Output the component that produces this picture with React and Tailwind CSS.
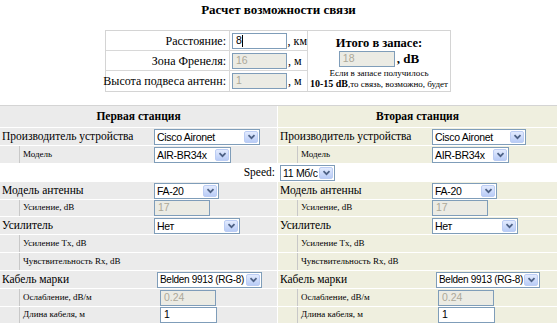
import React from "react";

const Chevron = () => (
  <svg width="9" height="6" viewBox="0 0 9 6">
    <path d="M1.5 1.2 L4.5 4.2 L7.5 1.2" stroke="#4d6185" strokeWidth="1.7" fill="none" />
  </svg>
);

function Select({ w, text, ts = "text-[10.5px]" }) {
  return (
    <div className={`${w} h-[16px] flex items-stretch border border-[#7f9db9] bg-white`}>
      <span className={`flex-1 pl-[2px] leading-[14px] ${ts} tracking-[-0.3px] [font-family:'Liberation_Sans',Arial,sans-serif] text-black whitespace-nowrap overflow-hidden`}>
        {text}
      </span>
      <span className="w-[14px] m-[1px] rounded-[2px] border border-[#bccdf4] bg-gradient-to-b from-[#e3ebfe] to-[#b9ccf6] flex items-center justify-center">
        <Chevron />
      </span>
    </div>
  );
}

function Input({ w, text, disabled, caret }) {
  return (
    <div
      className={`${w} h-[16px] flex items-center border border-[#7f9db9] ${
        disabled ? "bg-[#ebebe4] text-[#aca899]" : "bg-white text-black"
      } pl-[3px] text-[10.5px] [font-family:'Liberation_Sans',Arial,sans-serif]`}
    >
      {text}
      {caret && <span className="w-[1px] h-[12px] bg-black" />}
    </div>
  );
}

function Row({ h, left, right, white, first }) {
  return (
    <div className={`flex ${h} border-t ${first ? "border-[#d4d4d4]" : "border-white"}`}>
      <div className={`w-[277px] flex ${white ? "bg-white" : "bg-[#ebebeb]"}`}>{left}</div>
      <div className={`flex-1 flex border-l border-white ${white ? "bg-white" : "bg-[#efefdf]"}`}>{right}</div>
    </div>
  );
}

function Main({ label, lw, pl, children }) {
  return (
    <>
      <div className={`${lw} flex items-center pl-[2px] text-[11.5px] whitespace-nowrap`}>{label}</div>
      <div className={`flex-1 flex items-center ${pl}`}>{children}</div>
    </>
  );
}

function Sub({ label, lw, pl, children }) {
  return (
    <>
      <div className="w-[20px] border-r border-[#c8c8c8]" />
      <div className={`${lw} flex items-center pl-[3px] text-[9px] whitespace-nowrap`}>{label}</div>
      <div className={`flex-1 flex items-center ${pl}`}>{children}</div>
    </>
  );
}

function Header({ text }) {
  return <div className="flex-1 flex items-center justify-center font-bold text-[11.5px]">{text}</div>;
}

export default function App() {
  return (
    <div className="w-[557px] h-[326px] overflow-hidden bg-white [font-family:'Liberation_Serif','Times_New_Roman',serif] text-black">
      <div className="pt-[2px] h-[30px] text-center font-bold text-[13px] leading-[15px]">
        Расчет возможности связи
      </div>

      <div className="ml-[105px] w-[346px] grid grid-cols-[124px_78px_1fr] grid-rows-[20px_20px_20px] border border-[#d4d4d4]">
        <div className="h-[20px] flex items-center justify-end pr-[3px] text-[12px] whitespace-nowrap border-r border-b border-[#d8d8d8]">
          Расстояние:
        </div>
        <div className="h-[20px] flex items-center pl-[2px] gap-[1px] text-[12px] whitespace-nowrap border-r border-b border-[#d8d8d8]">
          <Input w="w-[55px]" text="8" caret />
          <span>, км</span>
        </div>
        <div className="row-span-3 flex flex-col items-center pt-[5px]">
          <div className="font-bold text-[12.5px] leading-[14px]">Итого в запасе:</div>
          <div className="flex items-center gap-[2px] mt-[1px]">
            <Input w="w-[56px]" text="18" disabled />
            <span className="font-bold text-[13px] leading-[16px]">, dB</span>
          </div>
          <div className="text-[9px] leading-[11px] mt-[1px]">Если в запасе получилось</div>
          <div className="text-[9px] leading-[10px] whitespace-nowrap">
            <b className="text-[10px]">10-15 dB</b>,то связь, возможно, будет
          </div>
        </div>
        <div className="h-[20px] flex items-center justify-end pr-[3px] text-[12px] whitespace-nowrap border-r border-b border-[#d8d8d8]">
          Зона Френеля:
        </div>
        <div className="h-[20px] flex items-center pl-[2px] gap-[1px] text-[12px] whitespace-nowrap border-r border-b border-[#d8d8d8]">
          <Input w="w-[55px]" text="16" disabled />
          <span>, м</span>
        </div>
        <div className="h-[20px] flex items-center justify-end pr-[3px] text-[12px] whitespace-nowrap border-r border-[#d8d8d8]">
          Высота подвеса антенн:
        </div>
        <div className="h-[20px] flex items-center pl-[2px] gap-[1px] text-[12px] whitespace-nowrap border-r border-[#d8d8d8]">
          <Input w="w-[55px]" text="1" disabled />
          <span>, м</span>
        </div>
      </div>

      <div className="mt-[13px]">
        <Row
          first
          h="h-[22px]"
          left={<Header text="Первая станция" />}
          right={<Header text="Вторая станция" />}
        />
        <Row
          h="h-[18px]"
          left={
            <Main label="Производитель устройства" lw="w-[150px]" pl="pl-[4px]">
              <Select w="w-[106px]" text="Cisco Aironet" />
            </Main>
          }
          right={
            <Main label="Производитель устройства" lw="w-[151px]" pl="pl-[3px]">
              <Select w="w-[94px]" text="Cisco Aironet" />
            </Main>
          }
        />
        <Row
          h="h-[18px]"
          left={
            <Sub label="Модель" lw="w-[130px]" pl="pl-[4px]">
              <Select w="w-[77px]" text="AIR-BR34x" />
            </Sub>
          }
          right={
            <Sub label="Модель" lw="w-[131px]" pl="pl-[3px]">
              <Select w="w-[77px]" text="AIR-BR34x" />
            </Sub>
          }
        />
        <Row
          white
          h="h-[18px]"
          left={<div className="flex-1 flex items-center justify-end pr-[2px] text-[11.5px]">Speed:</div>}
          right={
            <div className="flex items-center pl-[2px]">
              <Select w="w-[55px]" text="11 Мб/с" />
            </div>
          }
        />
        <Row
          h="h-[18px]"
          left={
            <Main label="Модель антенны" lw="w-[150px]" pl="pl-[4px]">
              <Select w="w-[65px]" text="FA-20" />
            </Main>
          }
          right={
            <Main label="Модель антенны" lw="w-[151px]" pl="pl-[3px]">
              <Select w="w-[65px]" text="FA-20" />
            </Main>
          }
        />
        <Row
          h="h-[17px]"
          left={
            <Sub label="Усиление, dB" lw="w-[130px]" pl="pl-[4px]">
              <Input w="w-[56px]" text="17" disabled />
            </Sub>
          }
          right={
            <Sub label="Усиление, dB" lw="w-[131px]" pl="pl-[3px]">
              <Input w="w-[56px]" text="17" disabled />
            </Sub>
          }
        />
        <Row
          h="h-[18px]"
          left={
            <Main label="Усилитель" lw="w-[150px]" pl="pl-[4px]">
              <Select w="w-[86px]" text="Нет" />
            </Main>
          }
          right={
            <Main label="Усилитель" lw="w-[151px]" pl="pl-[3px]">
              <Select w="w-[86px]" text="Нет" />
            </Main>
          }
        />
        <Row
          h="h-[18px]"
          left={<Sub label="Усиление Tx, dB" lw="w-[130px]" />}
          right={<Sub label="Усиление Tx, dB" lw="w-[131px]" />}
        />
        <Row
          h="h-[18px]"
          left={<Sub label="Чувствительность Rx, dB" lw="w-[130px]" />}
          right={<Sub label="Чувствительность Rx, dB" lw="w-[131px]" />}
        />
        <Row
          h="h-[18px]"
          left={
            <Main label="Кабель марки" lw="w-[150px]" pl="pl-[7px]">
              <Select w="w-[105px]" text="Belden 9913 (RG-8)" ts="text-[10px]" />
            </Main>
          }
          right={
            <Main label="Кабель марки" lw="w-[151px]" pl="pl-[7px]">
              <Select w="w-[104px]" text="Belden 9913 (RG-8)" ts="text-[10px]" />
            </Main>
          }
        />
        <Row
          h="h-[18px]"
          left={
            <Sub label="Ослабление, dB/м" lw="w-[130px]" pl="pl-[10px]">
              <Input w="w-[56px]" text="0.24" disabled />
            </Sub>
          }
          right={
            <Sub label="Ослабление, dB/м" lw="w-[131px]" pl="pl-[9px]">
              <Input w="w-[56px]" text="0.24" disabled />
            </Sub>
          }
        />
        <Row
          h="h-[17px]"
          left={
            <Sub label="Длина кабеля, м" lw="w-[130px]" pl="pl-[10px]">
              <Input w="w-[57px]" text="1" />
            </Sub>
          }
          right={
            <Sub label="Длина кабеля, м" lw="w-[131px]" pl="pl-[9px]">
              <Input w="w-[57px]" text="1" />
            </Sub>
          }
        />
      </div>
    </div>
  );
}
